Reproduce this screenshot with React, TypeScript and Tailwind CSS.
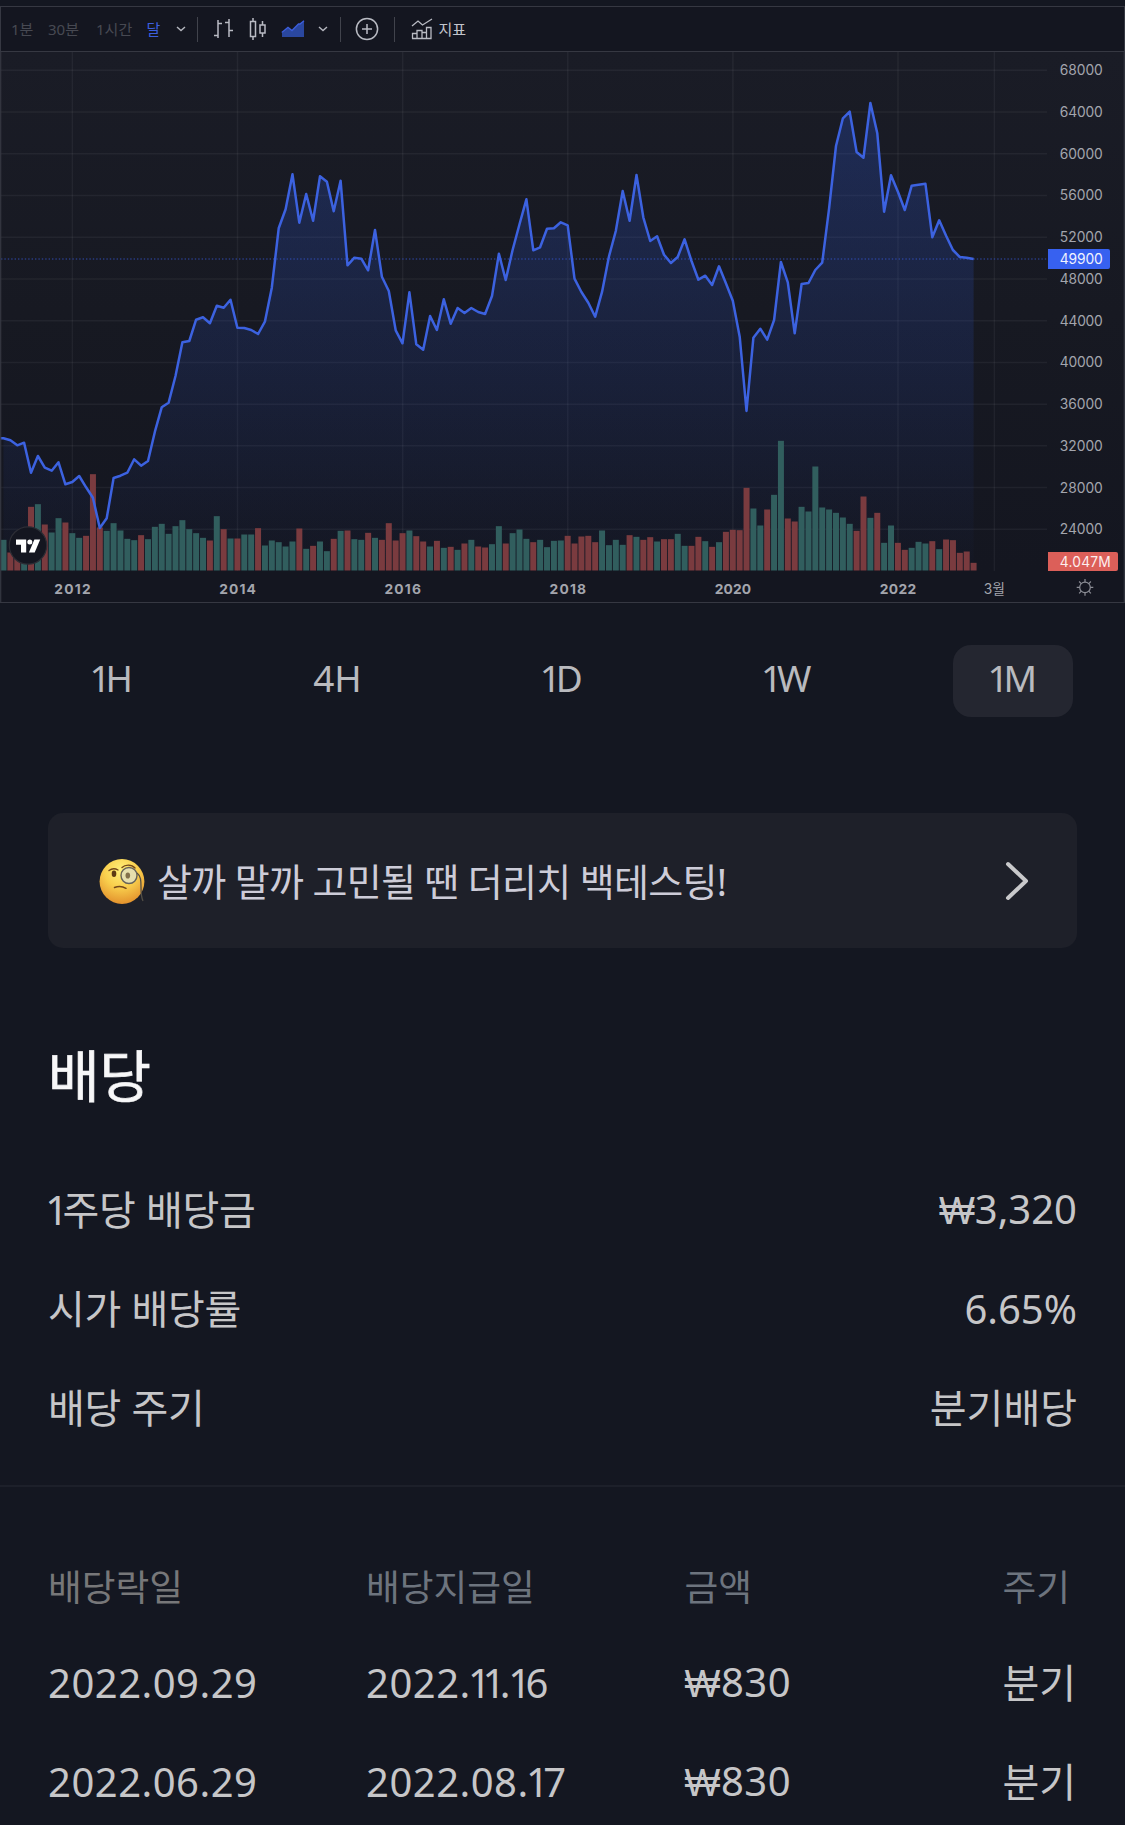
import React, { useState } from "react";

// Line heights of the monthly closes, in chart pixels
const closes = [
  438.3, 440.3, 445.3, 442.7, 472.7, 456, 467.7, 470.7, 462.3, 484.3, 482, 476,
  487.3, 497.7, 528, 518.3, 478, 475.7, 472.7, 459.3, 465.7, 461, 431.7, 407.3,
  402.7, 376, 342.3, 341, 319.7, 317.3, 323.3, 305.7, 307.7, 299.7, 327.7, 328,
  330, 334, 321.7, 287.7, 228.3, 209.3, 174.3, 222.7, 194, 220.7, 176.3, 181.7,
  211.3, 180.7, 265.3, 257.7, 258.7, 270.3, 230, 276.7, 291, 330.3, 343.3, 292.3,
  344.3, 349.7, 316, 330, 299.3, 323.7, 308, 313, 308, 312, 314, 296,
  253.7, 280, 250, 224.3, 199.3, 250.3, 247.3, 228.7, 228.3, 222.3, 225.3, 278.7,
  292, 302.7, 316.7, 291.7, 256.7, 231, 191, 220.7, 175, 217.3, 241, 236.3,
  254.7, 263, 257, 239.3, 261, 279.7, 275.7, 285, 266.3, 283.3, 300.7, 336.7,
  411, 337.7, 328.7, 339.7, 320, 262, 282.3, 333.3, 284, 283, 270, 262.7,
  208.3, 146, 118.3, 111.7, 152, 157.7, 103, 133.3, 211.7, 175.3, 191.7, 210,
  185.7, 184.7, 183.7, 237.3, 220.3, 235.7, 250, 257, 257.7, 259,
];

// Negative = falling month (red bar)
const volumes = [
  92, -54, -72, 72, -191, 199, -138, 114, 157, -144, 112, 98, -104, -289, -129,
  119, 142, 120, 95, 91, -106, 94, 131, 140, 110, 133, 151, 124, 112, 98, -90,
  163, -124, 96, -96, 108, 108, -127, 75, 90, 85, 72, 87, -126, 65, -74, 87, 58,
  -95, 119, -120, 94, 92, -113, 98, -92, -142, -90, -112, 120, -103, -87, 72,
  -89, 68, -71, 62, -81, 92, -72, -69, 79, 133, -81, 112, 123, 95, -85, 92, 70,
  89, 90, -104, -81, -102, -104, -85, 120, 76, 92, 77, -106, 101, -92, -100, 87,
  -94, -94, 110, 74, -74, -101, 88, -71, 85, -116, -122, -121, -248, 186, 135,
  -183, 227, 389, -156, -147, 191, 177, 312, 189, 183, 173, 159, 140, -119,
  -222, 158, -173, 83, 135, -83, -62, 68, 86, 81, -88, 64, -93, -91, -53, -57,
  -23,
];

const years = ["2012", "2014", "2016", "2018", "2020", "2022"];
const prices = [68000, 64000, 60000, 56000, 52000, 48000, 44000, 40000, 36000, 32000, 28000, 24000];

const BASE = 570.5;
const monthX = (i: number) => 3.5 + i * 6.88;
const priceY = (p: number) => 70.3 + ((68000 - p) / 4000) * 41.73;

const PriceChart: React.FC = () => {
  const line = closes.map((y, i) => `${monthX(i).toFixed(1)},${y}`).join(" ");

  return (
    <svg width="1125" height="550" viewBox="0 52 1125 550" className="block">
      <defs>
        <linearGradient id="panel" x1="0" y1="0" x2="0" y2="1">
          <stop offset="0" stopColor="#1a1c26" />
          <stop offset="0.5" stopColor="#171922" />
          <stop offset="1" stopColor="#141620" />
        </linearGradient>
        <linearGradient id="area" gradientUnits="userSpaceOnUse" x1="0" y1="103" x2="0" y2="571">
          <stop offset="0" stopColor="#2b55cf" stopOpacity="0.29" />
          <stop offset="0.55" stopColor="#2b50c4" stopOpacity="0.16" />
          <stop offset="1" stopColor="#2b50c4" stopOpacity="0.01" />
        </linearGradient>
      </defs>
      <rect x="0" y="52" width="1125" height="519" fill="url(#panel)" />

      {/* Grid */}
      <g stroke="#ffffff" strokeOpacity="0.05" strokeWidth="1.5">
        {prices.map((p) => (
          <line key={p} x1="0" x2="1047" y1={priceY(p)} y2={priceY(p)} />
        ))}
        {years.map((y, i) => (
          <line key={y} x1={72.4 + i * 165.12} x2={72.4 + i * 165.12} y1="52" y2="571" />
        ))}
        <line x1="994.4" x2="994.4" y1="52" y2="571" />
      </g>

      <polygon points={`${monthX(0)},571 ${line} ${monthX(141)},571`} fill="url(#area)" />

      {/* Volume */}
      {volumes.map((v, i) => (
        <rect
          key={i}
          x={monthX(i) - 3}
          y={BASE - Math.abs(v) / 3}
          width="6"
          height={Math.abs(v) / 3}
          fill={v > 0 ? "#315e5e" : "#7a3b3f"}
        />
      ))}

      <line x1="1" x2="1047" y1="259" y2="259" stroke="#3a5ce0" strokeOpacity="0.5" strokeWidth="1.3" strokeDasharray="1.4 2" />
      <polyline points={`0,438.3 ${line}`} fill="none" stroke="#3c62e0" strokeWidth="2.5" strokeLinejoin="round" />

      {/* Price axis */}
      <g fill="#a3a5ad" fontFamily="Inter, sans-serif" fontSize="13.8">
        {prices.map((p) => (
          <text key={p} x="1059.8" y={priceY(p) + 5} textLength="43">
            {p}
          </text>
        ))}
      </g>
      <path d="M1048 249h60a2 2 0 0 1 2 2v16a2 2 0 0 1-2 2h-60z" fill="#3761f0" />
      <text x="1059.8" y="264.2" textLength="43" fill="#f0f3ff" fontFamily="Inter, sans-serif" fontSize="13.8">
        49900
      </text>
      <path d="M1048 552h68a2 2 0 0 1 2 2v15a2 2 0 0 1-2 2h-68z" fill="#dc5f59" />
      <text x="1059.8" y="566.7" textLength="51" fill="#fdeeee" fontFamily="Inter, sans-serif" fontSize="13.8">
        4.047M
      </text>

      {/* Time axis */}
      <g fill="#a3a5ad" fontFamily="Inter, sans-serif" fontSize="13.8" fontWeight="700" textAnchor="middle">
        {years.map((y, i) => (
          <text key={y} x={72.4 + i * 165.12} y="593.5" textLength="36.5">
            {y}
          </text>
        ))}
      </g>
      <text x="994.4" y="593.8" textAnchor="middle" fill="#a3a5ad" fontFamily="Inter, 'Noto Sans CJK KR', sans-serif" fontSize="13.8">
        3월
      </text>
      <g stroke="#8b8d95" strokeWidth="1.2" fill="none">
        <circle cx="1085" cy="587.4" r="5.3" />
        <path d="M1085 582.1v-3M1085 592.7v3M1079.7 587.4h-3M1090.3 587.4h3M1081.3 583.7l-2.2-2.2M1088.7 583.7l2.2-2.2M1081.3 591.1l-2.2 2.2M1088.7 591.1l2.2 2.2" />
      </g>

      {/* Chart logo */}
      <circle cx="28" cy="545.5" r="18.7" fill="#141620" stroke="#2c2d35" strokeWidth="1.2" />
      <path d="M16 539.5h10.2v13h-5.2v-7.7h-5z" fill="#fff" />
      <circle cx="29.8" cy="542" r="2.5" fill="#fff" />
      <path d="M34.4 539.5h5.8l-5.5 13h-5.8z" fill="#fff" />

      {/* Frame */}
      <path d="M0.7 52V602M1124.3 52V602" stroke="#363842" strokeWidth="1.2" />
    </svg>
  );
};

const Chevron: React.FC = () => (
  <svg width="10" height="6" viewBox="0 0 10 6" fill="none" stroke="#b5b7bf" strokeWidth="1.4" className="shrink-0">
    <path d="M1 1l4 3.6L9 1" />
  </svg>
);

const Toolbar: React.FC = () => (
  <div className="mt-[6px] flex h-[46px] items-center border border-[#363842] bg-[#141620] pl-[10px] text-[15px] leading-none text-[#474952]">
    <span className="w-[37px] shrink-0">1분</span>
    <span className="w-[48px] shrink-0">30분</span>
    <span className="w-[50.5px] shrink-0">1시간</span>
    <span className="w-[29.5px] shrink-0 text-[#3c5fdf]">달</span>
    <Chevron />
    <span className="ml-[11px] h-[25px] w-px shrink-0 bg-[#41434c]" />

    {/* Chart types */}
    <svg width="20" height="20" viewBox="0 0 20 20" fill="none" stroke="#b9bbc3" strokeWidth="1.5" className="ml-[15px] shrink-0">
      <path d="M5 1v18M1 16.5h4M5 4.5h4M16 0v18M12 3.5h4M16 11.5h4" />
    </svg>
    <svg width="18" height="24" viewBox="0 0 18 24" fill="none" stroke="#b9bbc3" strokeWidth="1.5" className="ml-[15.5px] shrink-0">
      <path d="M1.5 4.5h5v15h-5zM4 1v3.5M4 19.5V23M11 8h5v8h-5zM13.5 4v4M13.5 16v4" />
    </svg>
    <svg width="24" height="18" viewBox="0 0 24 18" className="ml-[14px] shrink-0">
      <path d="M1 13l6-5 4 3 7-7h1l4-3v16H1z" fill="#2a479f" />
      <path d="M0.8 12.5L7 7.5l4 3 6.5-6.5h1.5L23 0.8" fill="none" stroke="#3c5fdf" strokeWidth="1.4" />
    </svg>
    <div className="ml-[13px] flex">
      <Chevron />
    </div>
    <span className="ml-[12px] h-[25px] w-px shrink-0 bg-[#41434c]" />

    <svg width="24" height="24" viewBox="0 0 24 24" fill="none" stroke="#b9bbc3" strokeWidth="1.5" className="ml-[14px] shrink-0">
      <circle cx="12" cy="12" r="10.6" />
      <path d="M12 7v10M7 12h10" />
    </svg>
    <span className="ml-[15.5px] h-[25px] w-px shrink-0 bg-[#41434c]" />

    <svg width="22" height="22" viewBox="0 0 22 22" fill="none" stroke="#b9bbc3" strokeWidth="1.3" className="ml-[15.5px] shrink-0">
      <path d="M1 8l6-5 4.5 4L21 1" />
      <path d="M1.5 20.5v-5H6v5M6 20.5v-8h5v8M11 20.5v-6h4.5v6M15.5 20.5v-11H20v11zM1 20.5h19.500" />
    </svg>
    <span className="ml-[6px] text-[15px] text-[#c3c5cc]">지표</span>
  </div>
);

// Digit "1" is set narrower than the others, the won sign wider
const Num: React.FC<{ children: string }> = ({ children }) => (
  <>
    {children.split(/([1₩])/).map((part, i) => {
      if (part === "1") {
        return (
          <span key={i} className="-ml-[0.07em] tracking-[-0.14em]">
            1
          </span>
        );
      }
      if (part === "₩") {
        return (
          <span key={i} className="font-['Liberation_Sans',sans-serif] text-[38px]">
            ₩
          </span>
        );
      }
      return part;
    })}
  </>
);

const ThinkingFace: React.FC = () => (
  <svg width="46" height="46" viewBox="0 0 46 46" fill="none" className="shrink-0">
    <defs>
      <radialGradient id="face" cx="0.48" cy="0.25" r="0.75">
        <stop offset="0" stopColor="#fff07a" />
        <stop offset="0.5" stopColor="#f9cf4d" />
        <stop offset="1" stopColor="#e3922d" />
      </radialGradient>
    </defs>
    <circle cx="23" cy="23.5" r="22.4" fill="url(#face)" />
    <ellipse cx="15" cy="15.8" rx="2.3" ry="3.3" fill="#5d3a12" />
    <path d="M10 12.500c3-2.300 6-2.300 9-.5" stroke="#74481a" strokeWidth="1.4" strokeLinecap="round" />
    <path d="M23 9.500c3-3 9.500-3.500 13 .5" stroke="#74481a" strokeWidth="1.4" strokeLinecap="round" />
    <circle cx="30" cy="17.5" r="8" fill="#e6dfae" stroke="#67635a" strokeWidth="1.4" />
    <ellipse cx="28.8" cy="17.5" rx="2.3" ry="3.1" fill="#83704b" />
    <path d="M38 15c4 3 4 8 4 14s0 10 2 14" stroke="#534e45" strokeWidth="1.3" />
    <path d="M15.500 29.500c4-1.500 8-1.200 11.500.8" stroke="#74481a" strokeWidth="1.5" strokeLinecap="round" />
  </svg>
);

const summary = [
  { label: "1주당 배당금", value: "₩3,320" },
  { label: "시가 배당률", value: "6.65%" },
  { label: "배당 주기", value: "분기배당" },
];

const payouts = [
  { exDate: "2022.09.29", payDate: "2022.11.16", amount: "₩830", cycle: "분기" },
  { exDate: "2022.06.29", payDate: "2022.08.17", amount: "₩830", cycle: "분기" },
];

export default function App() {
  const [range, setRange] = useState("1M");

  return (
    <div className="h-[1825px] w-[1125px] overflow-hidden bg-[#141721] font-['Noto_Sans','Noto_Sans_CJK_KR',sans-serif] text-[#c6c6c8]">
      <Toolbar />
      <div className="h-[551px] border-b border-[#363842] bg-[#141620]">
        <PriceChart />
      </div>

      {/* Range tabs */}
      <div className="mt-[42px] flex">
        {["1H", "4H", "1D", "1W", "1M"].map((r) => (
          <div key={r} className="flex flex-1 justify-center">
            <button
              onClick={() => setRange(r)}
              className={`h-[72px] w-[120px] rounded-[18px] pb-[8px] text-[37px] leading-none text-[#b9babe] ${
                range === r ? "bg-[#242630] pl-[2px]" : ""
              }`}
            >
              <Num>{r}</Num>
            </button>
          </div>
        ))}
      </div>

      {/* Backtesting banner */}
      <div className="mx-12 mt-[96px] flex h-[135px] items-center rounded-[15px] bg-[#1e2029] pr-[48px] pl-[51px]">
        <ThinkingFace />
        <span className="ml-[12px] flex-1 text-[38px] leading-none tracking-[-0.7px] text-[#cdccd8]">
          살까 말까 고민될 땐 더리치 백테스팅!
        </span>
        <svg width="24" height="42" viewBox="0 0 24 42" fill="none" stroke="#c9c9cb" strokeWidth="4" strokeLinecap="round" strokeLinejoin="round">
          <path d="M3 4l18 17L3 38" />
        </svg>
      </div>

      {/* Dividend */}
      <h2 className="mt-[91px] px-12 text-[56px] leading-[72px] font-normal text-[#f7f7f8] [-webkit-text-stroke:0.7px_#f7f7f8]">배당</h2>
      <div className="mt-[49px] px-12 text-[40px]">
        {summary.map((s) => (
          <div key={s.label} className="flex h-[99px] items-center justify-between leading-none">
            <span className="tracking-[-0.2px]">
              <Num>{s.label}</Num>
            </span>
            <span>
              <Num>{s.value}</Num>
            </span>
          </div>
        ))}
      </div>
      <div className="mt-[28px] h-[2px] bg-[#1d202a]" />

      <div className="mt-[51px] pl-12 text-[40px] leading-none">
        <div className="grid h-[95px] grid-cols-[318px_318.500px_318px_auto] items-center pt-[4px] text-[36.700px] text-[#6d747e]">
          <span className="text-[#777779]">배당락일</span>
          <span>배당지급일</span>
          <span>금액</span>
          <span>주기</span>
        </div>
        {payouts.map((p) => (
          <div key={p.exDate} className="grid h-[99px] grid-cols-[318px_318.500px_318px_auto] items-center">
            <span className="tracking-[0.5px]">
              <Num>{p.exDate}</Num>
            </span>
            <span className="tracking-[0.5px]">
              <Num>{p.payDate}</Num>
            </span>
            <span className="tracking-[0.5px]">
              <Num>{p.amount}</Num>
            </span>
            <span>{p.cycle}</span>
          </div>
        ))}
      </div>
    </div>
  );
}
